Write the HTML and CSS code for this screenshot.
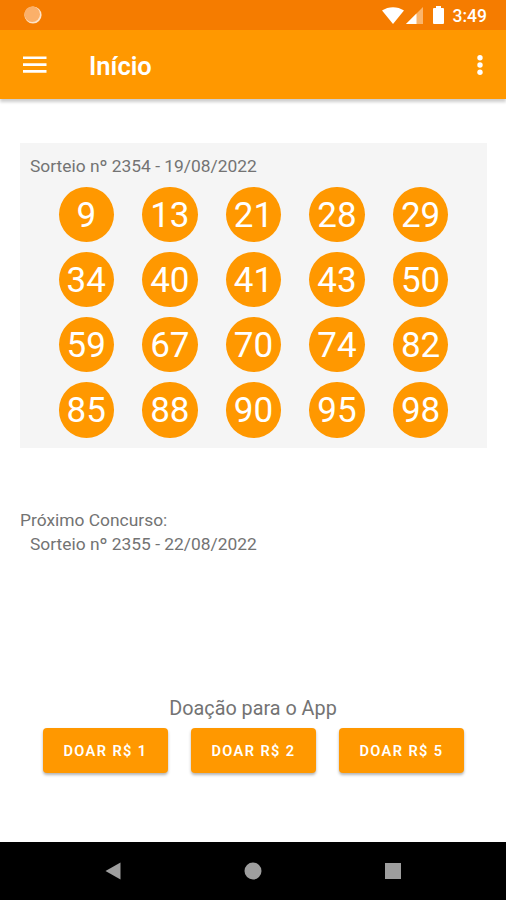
FILE: index.html
```html
<!DOCTYPE html>
<html lang="pt-BR">
<head>
    <meta charset="UTF-8">
    <title>Início</title>
    <link rel="stylesheet" href="styles.css">
</head>
<body>

<div class="status">
    <svg class="sync" width="18" height="18" viewBox="0 0 18 18"><circle cx="9" cy="9" r="8.6" fill="#fde3c8"/><circle cx="8.2" cy="8.2" r="7.8" fill="#fbb06a"/></svg>
    <div class="status-right">
        <svg width="22" height="17" viewBox="0 0 22 17"><path d="M0 3.5C6.5-1 15.5-1 22 3.5L11 17z" fill="#fff"/></svg>
        <svg class="signal" width="17" height="17" viewBox="0 0 17 17"><path d="M17 0v17H0z" fill="#fbb56b"/><path d="M10.5 6.5V17H0z" fill="#fff"/></svg>
        <svg class="battery" width="11" height="18" viewBox="0 0 11 18"><path d="M3 0h5v2h2q1 0 1 1v14q0 1-1 1H1q-1 0-1-1V3q0-1 1-1h2z" fill="#fff"/></svg>
        <span class="time">3:49</span>
    </div>
</div>
<div class="toolbar">
    <svg width="24" height="18" viewBox="0 0 24 18"><path d="M0 1.8h23.5M0 8.6h23.5M0 15.4h23.5" stroke="#fff" stroke-width="2.6"/></svg>
    <h1>Início</h1>
    <svg class="more" width="6" height="20" viewBox="0 0 6 20" fill="#fff"><circle cx="3" cy="2.7" r="2.7"/><circle cx="3" cy="10" r="2.7"/><circle cx="3" cy="17.3" r="2.7"/></svg>
</div>

<div class="main">
    <div class="sorteio">
        <p>Sorteio nº 2354 - 19/08/2022</p>
        <ul class="bolas">
            <li>9</li><li>13</li><li>21</li><li>28</li><li>29</li>
            <li>34</li><li>40</li><li>41</li><li>43</li><li>50</li>
            <li>59</li><li>67</li><li>70</li><li>74</li><li>82</li>
            <li>85</li><li>88</li><li>90</li><li>95</li><li>98</li>
        </ul>
    </div>
    <div class="proximo">
        <p>Próximo Concurso:</p>
        <p class="numero">Sorteio nº 2355 - 22/08/2022</p>
    </div>
    <div class="doacao">
        <p>Doação para o App</p>
        <div class="botoes">
            <button>DOAR R$ 1</button>
            <button>DOAR R$ 2</button>
            <button>DOAR R$ 5</button>
        </div>
    </div>
</div>

<div class="nav">
    <svg width="16" height="18" viewBox="0 0 16 18"><path d="M15.5.5v17L.5 9z" fill="#9e9e9e"/></svg>
    <svg width="18" height="18" viewBox="0 0 18 18"><circle cx="9" cy="9" r="8.5" fill="#9e9e9e"/></svg>
    <svg width="16" height="16" viewBox="0 0 16 16"><path d="M0 0h16v16H0z" fill="#9e9e9e"/></svg>
</div>

</body>
</html>
```
FILE: styles.css
```css
*{margin: 0;padding: 0;list-style: none;box-sizing: border-box;}
body{height: 900px;display: flex;flex-direction: column;overflow: hidden;background: #fff;font-family: Roboto, sans-serif;color: #737373;}
/*barra de status*/
.status{height: 30px;padding: 0 19px 0 24px;display: flex;align-items: center;justify-content: space-between;background: #f57c00;}
.status-right{display: flex;align-items: center;}
.signal{margin-left: 2px;}
.battery{margin-left: 10px;}
.time{margin-left: 9px;font-size: 17.5px;font-weight: 500;line-height: 32px;padding-top: 2px;color: #fff;}
/*barra do app*/
.toolbar{height: 69px;padding: 1px 23px 0;display: flex;align-items: center;background: #ff9800;box-shadow: 0 3px 3px rgba(0,0,0,.2);}
.toolbar h1{margin-left: 42px;padding-top: 1px;font-size: 25.5px;font-weight: 600;color: #fff;}
.more{margin-left: auto;}
.main{flex: 1;padding: 44px 20px 0;}
.sorteio{width: 467px;height: 305px;padding: 11px 10px 0;background: #f5f5f5;}
.sorteio p,.proximo p{font-size: 17.4px;line-height: 24px;}
/*bolas com os números sorteados*/
.bolas{margin: 8.5px 0 0 28.5px;display: grid;grid-template-columns: repeat(5, 55.5px);gap: 9.7px 28.1px;}
.bolas li{height: 55.5px;border-radius: 50%;background: #ff9800;color: #fff;font-size: 35px;line-height: 57px;text-align: center;}
.proximo{margin-top: 60px;}
.proximo .numero{padding-left: 10px;}
.doacao{margin-top: 140px;text-align: center;}
.doacao p{font-size: 19.8px;line-height: 26px;}
.botoes{margin-top: 6px;display: flex;justify-content: center;gap: 23px;}
.botoes button{width: 125px;height: 45px;padding-left: 1px;border: 0;border-radius: 4px;background: #ff9800;box-shadow: 0 2px 3px rgba(0,0,0,.3);color: #fff;font: 600 14.6px Roboto, sans-serif;letter-spacing: 1.4px;}
/*navegação do sistema*/
.nav{height: 58px;padding: 0 105px;display: flex;align-items: center;justify-content: space-between;background: #000;}
```
